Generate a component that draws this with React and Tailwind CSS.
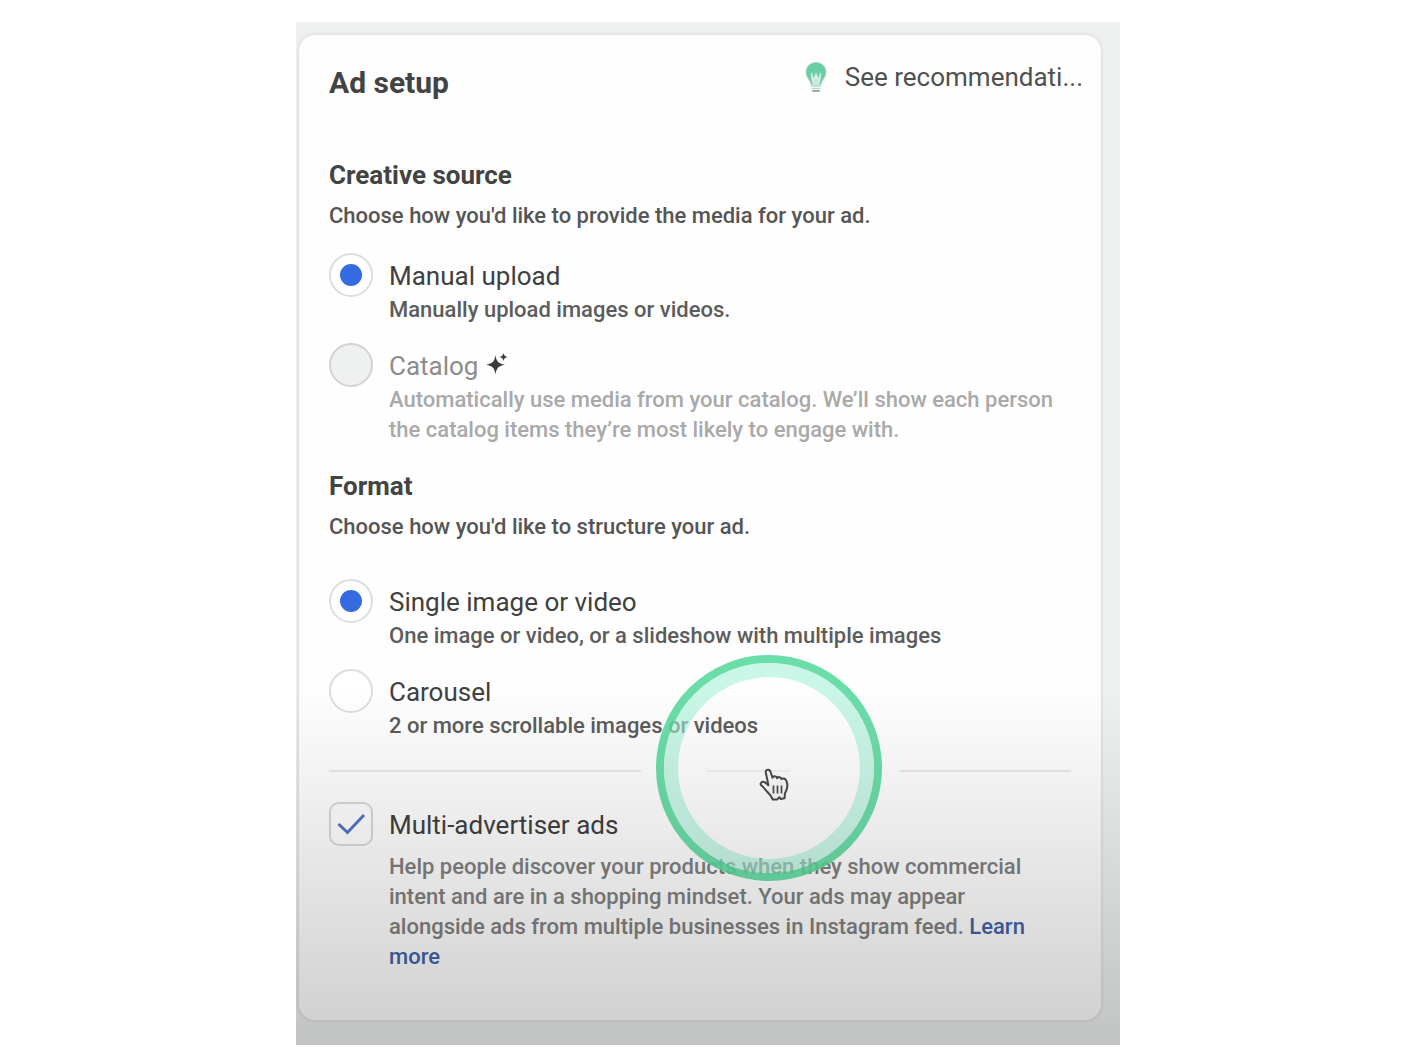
import { useState } from 'react';

const BulbIcon = () => (
  <svg viewBox="0 0 22 32" className="w-[22px] h-8 shrink-0" aria-hidden="true">
    <path
      d="M11 1.500C5.500 1.500 1 5.500 1 11c0 3.800 2 6 3.500 8.500.8 1.200 1.200 2.500 1.700 4h9.600c.5-1.500.9-2.800 1.700-4C19 17 21 14.800 21 11c0-5.500-4.500-9.500-10-9.500z"
      fill="#69cda5"
      stroke="#a9d9c5"
      strokeWidth="1"
    />
    <path d="M5.500 13l3.500 5 2-5 2 5 3.500-5-2 10.500h-7z" fill="#c3e9da" />
    <path d="M6.500 12l3 11.500M15.500 12l-3 11.500M9 18l2-5 2 5" fill="none" stroke="#e3efea" strokeWidth="1.200" />
    <path d="M6 25h10M6.500 27.500h9" stroke="#b4d8ca" strokeWidth="1.600" />
    <path d="M8 30h6" stroke="#a5aaa8" strokeWidth="2" strokeLinecap="round" />
  </svg>
);

const SparkleIcon = () => (
  <svg viewBox="0 0 22 22" className="w-[22px] h-[22px] mb-1" fill="#3a3a3a" aria-hidden="true">
    <path d="M9.500 2c.9 6 2.500 8.500 9.500 9.700-7 1.300-8.600 3.700-9.500 9.800-.9-6.100-2.500-8.500-9.500-9.800C7 10.500 8.600 8 9.500 2z" />
    <path d="M17.500 0c.5 2.500 1.400 3.300 4.200 4-2.800.7-3.700 1.500-4.200 4-.5-2.500-1.400-3.300-4.200-4 2.800-.7 3.700-1.500 4.200-4z" />
  </svg>
);

const HandCursor = () => (
  <svg viewBox="0 0 32 34" className="w-8 h-[34px]" aria-hidden="true">
    <path
      d="M7 5.500C6.300 3.200 7.200 1.800 8.800 1.700c1.500-.1 2.400.8 2.900 2.500l1.800 5.600c.5-2 4-2 4.600.4.800-1.700 3.900-1.400 4.500.9 1-1.200 3.500-.7 4.600 1.400.9 1.800 1.300 3.800 1.100 6.200-.2 2.800-1.400 4.700-2.400 6.800l-.3 4.700-3.800.8-1.500-1.800-1.900 2.200-4.600.1c-1.300-3.200-3.200-5.400-5.600-7.700-2.200-2.200-3.500-4.700-6-6.500-1.600-1.800.7-4.300 3-3.300 1.400.6 2.600 1.800 4.200 3.200z"
      fill="#fafafa"
      stroke="#4a4a4a"
      strokeWidth="2"
      strokeLinejoin="round"
    />
    <path d="M14.500 17.500v8M18.500 17.500v8M22.500 17.500v8" stroke="#4a4a4a" strokeWidth="1.700" />
  </svg>
);

const RadioOption = ({ id, name, title, description, checked, disabled, onChange, icon }) => (
  <div className="flex gap-4">
    <input
      type="radio"
      id={id}
      name={name}
      checked={checked}
      disabled={disabled}
      onChange={onChange}
      className="appearance-none w-11 h-11 shrink-0 rounded-full border-2 border-[#dddddd] bg-white grid place-content-center before:w-[22px] before:h-[22px] before:rounded-full checked:before:bg-[#366ae0] disabled:bg-[#eff1f0] disabled:border-[#d2d2d2]"
    />
    <div className="pt-1 pr-4">
      <label
        htmlFor={id}
        className={`flex items-center gap-2 text-[26px] leading-[38px] ${disabled ? 'text-[#8c8c8c]' : 'text-[#404040]'}`}
      >
        {title}
        {icon}
      </label>
      <p className={`text-[22px] leading-[30px] font-medium ${disabled ? 'text-[#a9a9a9]' : 'text-[#5c5c5c]'}`}>{description}</p>
    </div>
  </div>
);

const SectionHeading = ({ title, description }) => (
  <>
    <h2 className="text-[26px] leading-9 font-bold text-[#434343]">{title}</h2>
    <p className="mt-2 text-[22px] leading-[30px] font-medium text-[#555555]">{description}</p>
  </>
);

const App = () => {
  const [source, setSource] = useState('manual');
  const [format, setFormat] = useState('single');
  const [multi, setMulti] = useState(true);

  return (
    <main className="py-[22px] bg-white font-['Roboto',sans-serif]">
      <div className="relative max-w-[824px] mx-auto bg-[#eff1f1] pt-[13px] pb-[25px] pl-[3px] pr-[19px]">
        <section className="bg-[#fefefe] rounded-2xl shadow-[0_0_4px_rgba(0,0,0,0.14)] pt-6 pb-12 pl-[30px] pr-[18px]">
          <header className="flex justify-between items-start">
            <h1 className="pt-1.5 text-[30px] leading-9 font-bold text-[#434343]">Ad setup</h1>
            <button type="button" className="flex items-center gap-[18px] text-[26px] leading-9 text-[#505050]">
              <BulbIcon />
              See recommendati...
            </button>
          </header>

          <div className="mt-14">
            <SectionHeading title="Creative source" description="Choose how you'd like to provide the media for your ad." />
            <div className="mt-[22px] flex flex-col gap-[18px]">
              <RadioOption
                id="manual"
                name="source"
                title="Manual upload"
                description="Manually upload images or videos."
                checked={source === 'manual'}
                onChange={() => setSource('manual')}
              />
              <RadioOption
                id="catalog"
                name="source"
                title="Catalog"
                description="Automatically use media from your catalog. We’ll show each person the catalog items they’re most likely to engage with."
                checked={source === 'catalog'}
                onChange={() => setSource('catalog')}
                icon={<SparkleIcon />}
                disabled
              />
            </div>
          </div>

          <div className="mt-[23px]">
            <SectionHeading title="Format" description="Choose how you'd like to structure your ad." />
            <div className="mt-[37px] flex flex-col gap-[18px]">
              <RadioOption
                id="single"
                name="format"
                title="Single image or video"
                description="One image or video, or a slideshow with multiple images"
                checked={format === 'single'}
                onChange={() => setFormat('single')}
              />
              <RadioOption
                id="carousel"
                name="format"
                title="Carousel"
                description="2 or more scrollable images or videos"
                checked={format === 'carousel'}
                onChange={() => setFormat('carousel')}
              />
            </div>
          </div>

          {/* Divider with the click highlight over it */}
          <div className="relative mt-[29px] mr-3 flex h-0.5">
            <div className="w-[312px] bg-[#e9e9e9]" />
            <div className="ml-[65px] w-[84px] bg-[#f3f3f3]" />
            <div className="ml-auto w-[171px] bg-[#e9e9e9]" />
            <div className="absolute z-10 left-[327px] -top-[115px] w-[226px] h-[226px] rounded-full border-8 border-[#5bd99f]/90 pointer-events-none">
              <div className="w-full h-full rounded-full border-[14px] border-[#a5f0d5]/60" />
            </div>
            <div className="absolute z-10 left-[430px] -top-0.5 pointer-events-none">
              <HandCursor />
            </div>
          </div>

          <div className="mt-[30px] flex gap-4">
            <div className="relative w-11 h-11 shrink-0">
              <input
                type="checkbox"
                id="multi"
                checked={multi}
                onChange={() => setMulti(!multi)}
                className="peer appearance-none block w-11 h-11 rounded-[10px] border-2 border-[#d8d8d8]"
              />
              <svg
                viewBox="0 0 44 44"
                className="absolute inset-0 w-11 h-11 pointer-events-none hidden peer-checked:block"
                fill="none"
                stroke="#5373c2"
                strokeWidth="3"
                aria-hidden="true"
              >
                <path d="M9.500 22l9 8.500L35 13" />
              </svg>
            </div>
            <div className="pt-1 pr-8">
              <label htmlFor="multi" className="block text-[26px] leading-[38px] text-[#404040]">
                Multi-advertiser ads
              </label>
              <p className="mt-2 text-[22px] leading-[30px] font-medium text-[#808080]">
                Help people discover your products when they show commercial intent and are in a shopping mindset. Your ads may appear alongside ads from multiple businesses in Instagram feed.{' '}
                <a href="#learn-more" className="text-[#4562a8]">Learn more</a>
              </p>
            </div>
          </div>
        </section>

        <div className="absolute z-20 inset-x-0 bottom-0 h-[360px] bg-linear-to-b from-black/0 to-black/19 pointer-events-none" />
      </div>
    </main>
  );
};

export default App;
